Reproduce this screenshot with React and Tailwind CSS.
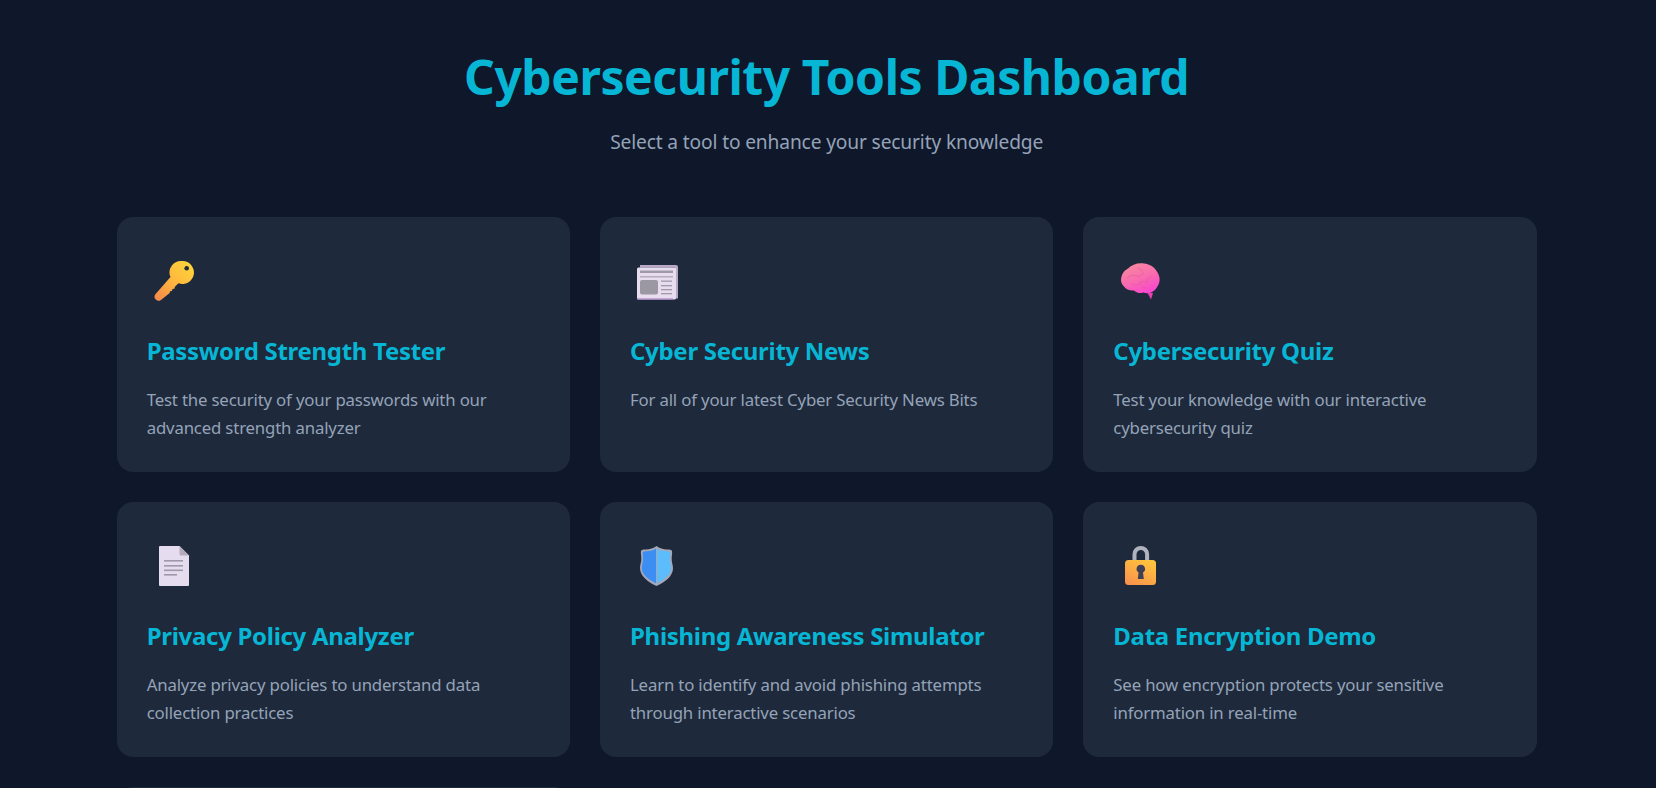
const FONT = "font-['Noto_Sans','Open_Sans',sans-serif]";

function KeyIcon() {
  return (
    <svg width="44" height="44" viewBox="0 0 44 44">
      <defs>
        <linearGradient id="kg" x1="1" y1="0" x2="0" y2="1">
          <stop offset="0" stopColor="#ffd83a" />
          <stop offset="0.5" stopColor="#ffb83f" />
          <stop offset="1" stopColor="#f5864b" />
        </linearGradient>
      </defs>
      <path
        fill="url(#kg)"
        d="M30.500 4a11.500 11.500 0 1 1-4 22.300l-2.600 2.400-1 1-.5 2-2 .2-.4 2-2 .3-.3 1.700-8.700 7a4 4 0 0 1-5.600-5.600L18.500 20A11.500 11.500 0 0 1 30.500 4z"
      />
      <circle cx="34.700" cy="11.300" r="2.300" fill="#1e293b" />
    </svg>
  );
}

function NewsIcon() {
  return (
    <svg width="44" height="44" viewBox="0 -4.5 44 44">
      <path d="M5 3.500h36a2 2 0 0 1 2 2V37h-3V6H5z" fill="#b9a9c6" />
      <rect x="2" y="6" width="39" height="32" rx="1.500" fill="#e8dcef" />
      <rect x="2" y="36.800" width="36" height="1.200" fill="#b58ed0" />
      <rect x="5" y="9" width="33" height="2.500" fill="#9f99a9" />
      <rect x="5" y="14.500" width="33" height="1.500" fill="#b3acba" />
      <rect x="5" y="18.500" width="18" height="14.500" rx="2" fill="#9c98a3" />
      <rect x="26" y="19" width="11" height="1.300" fill="#9f99a9" />
      <rect x="26" y="23.500" width="11" height="1.300" fill="#9f99a9" />
      <rect x="26" y="27.500" width="11" height="1.300" fill="#9f99a9" />
      <rect x="26" y="31.500" width="11" height="1.300" fill="#9f99a9" />
    </svg>
  );
}

function BrainIcon() {
  return (
    <svg width="44" height="44" viewBox="0 -2 44 44">
      <defs>
        <linearGradient id="bg" x1="0.2" y1="0" x2="0.7" y2="1">
          <stop offset="0" stopColor="#f98a9e" />
          <stop offset="0.55" stopColor="#f86ab0" />
          <stop offset="1" stopColor="#fb45d0" />
        </linearGradient>
      </defs>
      <path d="M29 33l6 1-2 6.500z" fill="#e93fb5" />
      <path
        fill="url(#bg)"
        d="M3 21C3.500 14 7 11 10 9.500 14 5.500 20 3.500 26 4.500c6 .5 11 4 13.500 9 2.500 4 3 9 .5 13-1.500 3-3 5-6 6.500-3 1.500-6 1.500-9 .5-3 1.500-7 0-9-2-4 .5-8-1-10-4-1.500-1.500-3-3.500-3-6.500z"
      />
      <g fill="none" stroke="#e25a9a" strokeWidth="1" strokeLinecap="round" opacity="0.6">
        <path d="M9 19c3-3 6-3 9-2s5 0 6-2" />
        <path d="M20 9c3 1 5 3 5 6" />
        <path d="M14 25c3 2 6 1 8-1 2-2 5-2 7-1" />
        <path d="M29 23c0-3 2-5 5-6" />
        <path d="M22 24c1 3 3 5 6 5" />
      </g>
    </svg>
  );
}

function DocIcon() {
  return (
    <svg width="44" height="44" viewBox="0 0 44 44">
      <path d="M8 4h19.500L37 13.500V43a1 1 0 0 1-1 1H8a1 1 0 0 1-1-1V5a1 1 0 0 1 1-1z" fill="#e6dcef" />
      <path d="M27.500 4L37 13.500l-8 0a1.500 1.500 0 0 1-1.500-1.500z" fill="#b5abbd" />
      <rect x="12" y="18" width="19" height="1.600" fill="#9f99a9" />
      <rect x="12" y="23" width="19" height="1.600" fill="#9f99a9" />
      <rect x="12" y="27.500" width="19" height="1.600" fill="#9f99a9" />
      <rect x="12" y="32" width="13" height="1.600" fill="#9f99a9" />
    </svg>
  );
}

function ShieldIcon() {
  return (
    <svg width="44" height="44" viewBox="0 0 44 44">
      <path
        d="M21.500 4c3 2.400 7.500 3.600 11.500 3.400 1.700 0 3.200.4 4 1.300.4 2.400-.2 4.800-.3 7.300-.3 3.700 1.300 6.600 1.300 10.300 0 8-8 14-16.500 17.700C13 40 5 34 5 26c0-3.700 1.600-6.600 1.300-10.300C6.200 13.300 5.600 11 6 8.700c.8-.9 2.300-1.300 4-1.300C14 7.600 18.500 6.400 21.500 4z"
        fill="#a4a8b8"
      />
      <path d="M21 6.400v34.800C13.500 37.800 6.800 32.500 6.800 26c0-3.700 1.500-6.500 1.300-10.300-.1-1.900-.5-3.900-.4-5.800 1-.5 2.800-.7 4.300-.7 3.300 0 6.700-1 9-2.800z" fill="#3d8ef2" />
      <path d="M22 6.400v34.800c7.500-3.400 14.200-8.700 14.200-15.200 0-3.700-1.500-6.500-1.300-10.300.1-1.900.5-3.900.4-5.800-1-.5-2.800-.7-4.300-.7-3.300 0-6.700-1-9-2.800z" fill="#5dbcfb" />
    </svg>
  );
}

function LockIcon() {
  return (
    <svg width="44" height="44" viewBox="0 0 44 44">
      <defs>
        <linearGradient id="lg" x1="0.8" y1="0" x2="0.2" y2="1">
          <stop offset="0" stopColor="#ffc63d" />
          <stop offset="1" stopColor="#f9924c" />
        </linearGradient>
      </defs>
      <path d="M16.500 20v-7.800a6.300 6.300 0 0 1 12.600 0V20" fill="none" stroke="#b0b3bf" strokeWidth="4" />
      <rect x="7" y="18" width="31" height="25" rx="3.500" fill="url(#lg)" />
      <path d="M22.800 22.800a4.200 4.200 0 0 1 2.200 7.800l.8 6.400h-6l.8-6.400a4.200 4.200 0 0 1 2.200-7.800z" fill="#3e3e55" />
    </svg>
  );
}

const tools = [
  { icon: <KeyIcon />, title: "Password Strength Tester", desc: "Test the security of your passwords with our advanced strength analyzer" },
  { icon: <NewsIcon />, title: "Cyber Security News", desc: "For all of your latest Cyber Security News Bits" },
  { icon: <BrainIcon />, title: "Cybersecurity Quiz", desc: "Test your knowledge with our interactive cybersecurity quiz" },
  { icon: <DocIcon />, title: "Privacy Policy Analyzer", desc: "Analyze privacy policies to understand data collection practices" },
  { icon: <ShieldIcon />, title: "Phishing Awareness Simulator", desc: "Learn to identify and avoid phishing attempts through interactive scenarios" },
  { icon: <LockIcon />, title: "Data Encryption Demo", desc: "See how encryption protects your sensitive information in real-time" },
];

function Card({ icon, title, desc }) {
  return (
    <div className="h-[255px] rounded-[16px] bg-[#1e293b] p-[30px]">
      <div className="mb-[34px] ml-[5px] mt-[10px] h-[44px]">{icon}</div>
      <h2 className="mb-[19px] text-[24px] leading-[32px] font-bold tracking-[-0.3px] text-[#06b6d4]">{title}</h2>
      <p className="text-[16.8px] leading-[28px] tracking-[-0.17px] text-[#94a3b8]">{desc}</p>
    </div>
  );
}

export default function App() {
  return (
    <div className={`h-[788px] overflow-hidden bg-[#0f172a] ${FONT}`}>
      <div className="ml-[116.67px] w-[1420px] pt-[41px]">
        <header className="mb-[61px] text-center">
          <h1 className="mb-[15px] text-[48px] leading-[72px] font-bold tracking-[-0.45px] text-[#06b6d4]">Cybersecurity Tools Dashboard</h1>
          <p className="text-[19.2px] leading-[28px] tracking-[-0.15px] text-[#94a3b8]">Select a tool to enhance your security knowledge</p>
        </header>
        <div className="grid grid-cols-3 gap-[30px]">
          {tools.map((t) => (
            <Card key={t.title} {...t} />
          ))}
          <div className="h-[255px] rounded-[16px] bg-[#1e293b]" />
        </div>
      </div>
    </div>
  );
}
